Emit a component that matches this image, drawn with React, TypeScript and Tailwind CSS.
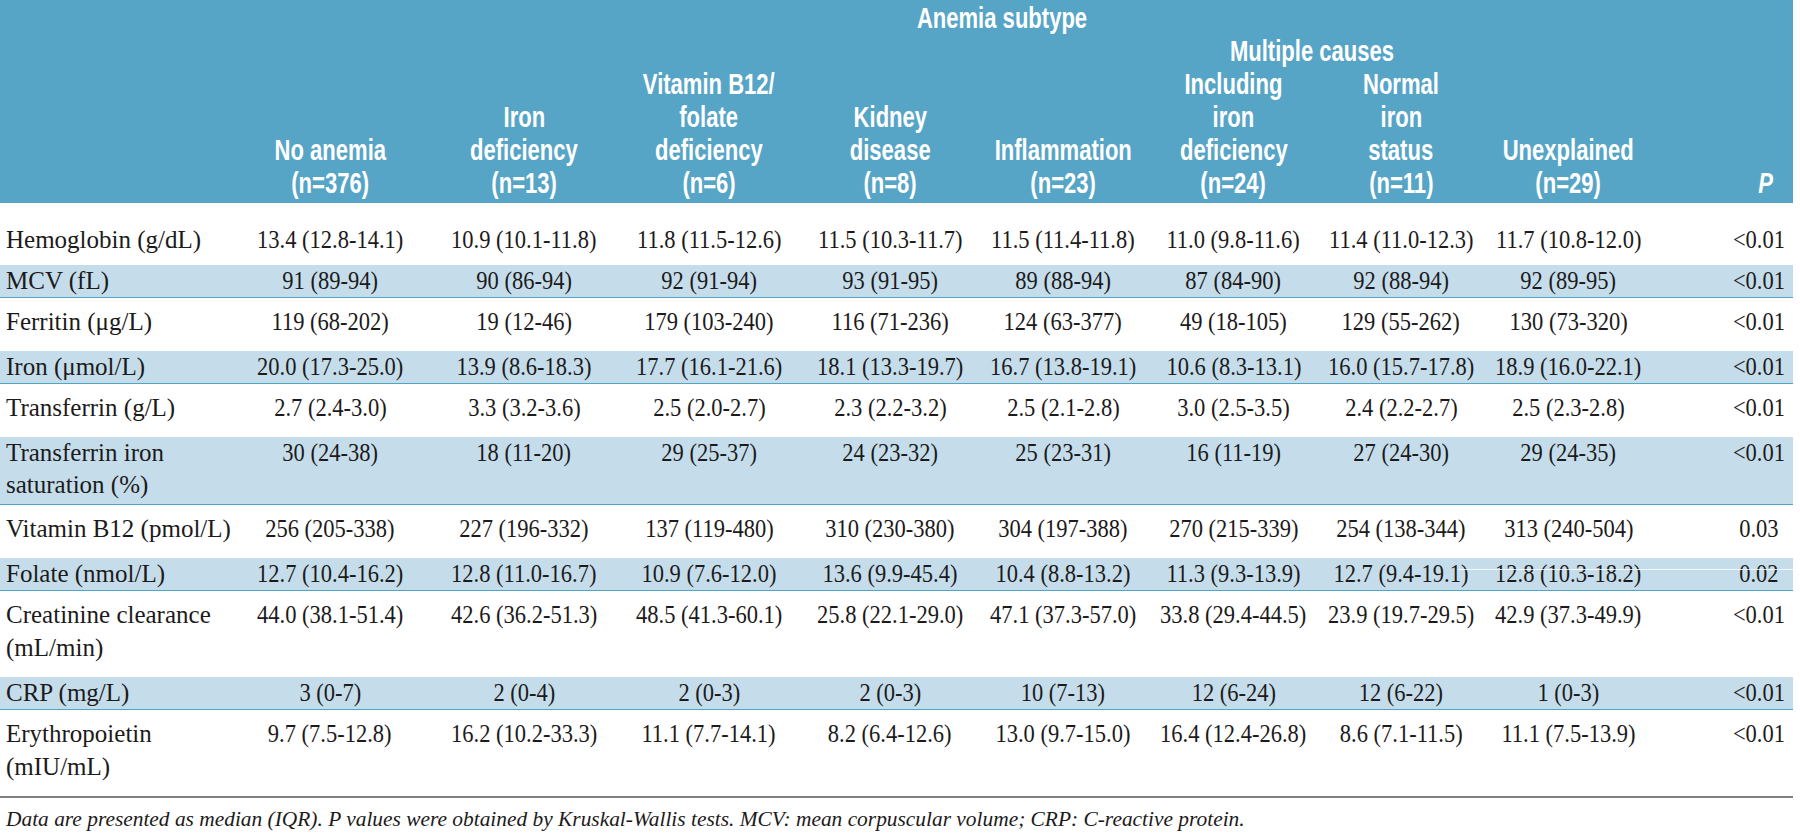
const cols = [232, 196, 192, 178, 184, 162, 179, 156, 179, 135];

const heads: string[][] = [
  ['No anemia', '(n=376)'],
  ['Iron', 'deficiency', '(n=13)'],
  ['Vitamin B12/', 'folate', 'deficiency', '(n=6)'],
  ['Kidney', 'disease', '(n=8)'],
  ['Inflammation', '(n=23)'],
  ['Including', 'iron', 'deficiency', '(n=24)'],
  ['Normal', 'iron', 'status', '(n=11)'],
  ['Unexplained', '(n=29)'],
];

interface Row {
  label: string[];
  values: string[];
  shaded: boolean;
}

const rows: Row[] = [
  { label: ['Hemoglobin (g/dL)'], shaded: false, values: ['13.4 (12.8-14.1)', '10.9 (10.1-11.8)', '11.8 (11.5-12.6)', '11.5 (10.3-11.7)', '11.5 (11.4-11.8)', '11.0 (9.8-11.6)', '11.4 (11.0-12.3)', '11.7 (10.8-12.0)', '<0.01'] },
  { label: ['MCV (fL)'], shaded: true, values: ['91 (89-94)', '90 (86-94)', '92 (91-94)', '93 (91-95)', '89 (88-94)', '87 (84-90)', '92 (88-94)', '92 (89-95)', '<0.01'] },
  { label: ['Ferritin (\u03bcg/L)'], shaded: false, values: ['119 (68-202)', '19 (12-46)', '179 (103-240)', '116 (71-236)', '124 (63-377)', '49 (18-105)', '129 (55-262)', '130 (73-320)', '<0.01'] },
  { label: ['Iron (\u03bcmol/L)'], shaded: true, values: ['20.0 (17.3-25.0)', '13.9 (8.6-18.3)', '17.7 (16.1-21.6)', '18.1 (13.3-19.7)', '16.7 (13.8-19.1)', '10.6 (8.3-13.1)', '16.0 (15.7-17.8)', '18.9 (16.0-22.1)', '<0.01'] },
  { label: ['Transferrin (g/L)'], shaded: false, values: ['2.7 (2.4-3.0)', '3.3 (3.2-3.6)', '2.5 (2.0-2.7)', '2.3 (2.2-3.2)', '2.5 (2.1-2.8)', '3.0 (2.5-3.5)', '2.4 (2.2-2.7)', '2.5 (2.3-2.8)', '<0.01'] },
  { label: ['Transferrin iron', 'saturation (%)'], shaded: true, values: ['30 (24-38)', '18 (11-20)', '29 (25-37)', '24 (23-32)', '25 (23-31)', '16 (11-19)', '27 (24-30)', '29 (24-35)', '<0.01'] },
  { label: ['Vitamin B12 (pmol/L)'], shaded: false, values: ['256 (205-338)', '227 (196-332)', '137 (119-480)', '310 (230-380)', '304 (197-388)', '270 (215-339)', '254 (138-344)', '313 (240-504)', '0.03'] },
  { label: ['Folate (nmol/L)'], shaded: true, values: ['12.7 (10.4-16.2)', '12.8 (11.0-16.7)', '10.9 (7.6-12.0)', '13.6 (9.9-45.4)', '10.4 (8.8-13.2)', '11.3 (9.3-13.9)', '12.7 (9.4-19.1)', '12.8 (10.3-18.2)', '0.02'] },
  { label: ['Creatinine clearance', '(mL/min)'], shaded: false, values: ['44.0 (38.1-51.4)', '42.6 (36.2-51.3)', '48.5 (41.3-60.1)', '25.8 (22.1-29.0)', '47.1 (37.3-57.0)', '33.8 (29.4-44.5)', '23.9 (19.7-29.5)', '42.9 (37.3-49.9)', '<0.01'] },
  { label: ['CRP (mg/L)'], shaded: true, values: ['3 (0-7)', '2 (0-4)', '2 (0-3)', '2 (0-3)', '10 (7-13)', '12 (6-24)', '12 (6-22)', '1 (0-3)', '<0.01'] },
  { label: ['Erythropoietin', '(mIU/mL)'], shaded: false, values: ['9.7 (7.5-12.8)', '16.2 (10.2-33.3)', '11.1 (7.7-14.1)', '8.2 (6.4-12.6)', '13.0 (9.7-15.0)', '16.4 (12.4-26.8)', '8.6 (7.1-11.5)', '11.1 (7.5-13.9)', '<0.01'] },
];

function HeadLine({ text }: { text: string }) {
  return <span className="block whitespace-nowrap scale-x-[0.76]">{text}</span>;
}

function rowPad(row: Row, i: number) {
  if (row.shaded) {
    return row.label.length > 1 ? 'leading-[32px] pb-[3px]' : 'leading-[32px]';
  }
  if (i === 0) return 'leading-[33px] pt-[20px] pb-[9px]';
  return 'leading-[33px] pt-[7px] pb-[13px]';
}

export default function App() {
  return (
    <div className="w-[1800px] h-[840px] bg-white overflow-hidden font-['Liberation_Serif',serif] text-[#1c1a1a]">
      <table className="table-fixed border-collapse w-[1793px]">
        <colgroup>
          {cols.map((w, i) => (
            <col key={i} style={{ width: w }} />
          ))}
        </colgroup>
        <thead className="bg-[#57a5c6] text-white font-['Liberation_Sans',Arial,sans-serif] font-bold text-[29px] leading-[33px]">
          <tr>
            <th className="pt-[2px]"></th>
            <th colSpan={9} className="pt-[2px] pr-[21px] font-bold">
              <div className="flex justify-center">
                <HeadLine text="Anemia subtype" />
              </div>
            </th>
          </tr>
          <tr>
            <th colSpan={6}></th>
            <th colSpan={2} className="font-bold">
              <div className="flex justify-center">
                <HeadLine text="Multiple causes" />
              </div>
            </th>
            <th colSpan={2}></th>
          </tr>
          <tr>
            <th className="pb-[3px]"></th>
            {heads.map((lines, i) => (
              <th key={i} className="pb-[3px] align-bottom font-bold">
                <div className="flex flex-col items-center">
                  {lines.map((l, j) => (
                    <HeadLine key={j} text={l} />
                  ))}
                </div>
              </th>
            ))}
            <th className="pb-[3px] pl-[80px] align-bottom font-bold">
              <div className="flex justify-center italic">
                <HeadLine text="P" />
              </div>
            </th>
          </tr>
        </thead>
        <tbody className="text-[25px]">
          {rows.map((row, i) => (
            <tr
              key={i}
              className={row.shaded ? 'bg-[#c5ddeb] border-b border-[#4ea5c4]' : 'bg-white'}
            >
              <td className={`align-top pl-[6px] whitespace-nowrap ${rowPad(row, i)}`}>
                {row.label.map((l, j) => (
                  <div key={j}>{l}</div>
                ))}
              </td>
              {row.values.map((v, j) => (
                <td
                  key={j}
                  className={`align-top ${rowPad(row, i)} ${j === 8 ? 'pl-[67px]' : ''} ${
                    i === 7 && j === 7 ? 'relative' : ''
                  }`}
                >
                  <div className="flex justify-center">
                    <span className="whitespace-nowrap scale-x-[0.9]">{v}</span>
                  </div>
                  {i === 7 && j === 7 && (
                    <span className="absolute left-[-21px] top-[11px] w-[335px] h-[1px] bg-white/80 z-10"></span>
                  )}
                </td>
              ))}
            </tr>
          ))}
        </tbody>
      </table>
      <div className="w-[1793px] border-t-2 border-[#7f7f7f] pt-[7px] pl-[6px] italic text-[21.4px] leading-[28px]">
        Data are presented as median (IQR). P values were obtained by Kruskal-Wallis tests. MCV: mean corpuscular volume; CRP: C-reactive protein.
      </div>
    </div>
  );
}
